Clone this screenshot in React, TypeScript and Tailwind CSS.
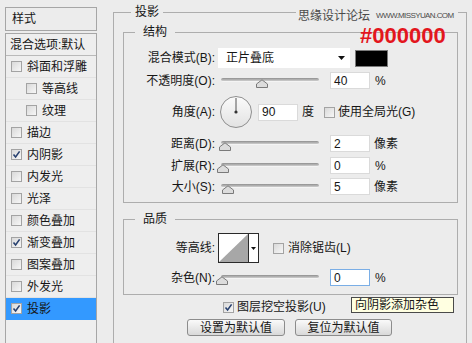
import React from "react";

type Item = { label: string; sub?: boolean; checked?: boolean; active?: boolean };

const styleItems: Item[] = [
  { label: "斜面和浮雕" },
  { label: "等高线", sub: true },
  { label: "纹理", sub: true },
  { label: "描边" },
  { label: "内阴影", checked: true },
  { label: "内发光" },
  { label: "光泽" },
  { label: "颜色叠加" },
  { label: "渐变叠加", checked: true },
  { label: "图案叠加" },
  { label: "外发光" },
  { label: "投影", checked: true, active: true },
];

function Check({ checked }: { checked?: boolean }) {
  return (
    <span className="w-[11px] h-[11px] shrink-0 border border-[#a3a3a3] bg-gradient-to-br from-[#d9d9d9] to-[#f7f7f7] flex items-center justify-center">
      {checked && (
        <svg width="9" height="9" viewBox="0 0 9 9">
          <path d="M1.5 4.5 L3.6 7 L7.6 1.4" stroke="#27406f" strokeWidth="1.6" fill="none" />
        </svg>
      )}
    </span>
  );
}

function Label({ children }: { children: React.ReactNode }) {
  return <span className="w-[91px] shrink-0 text-right">{children}</span>;
}

// thumb = centre of the slider knob, in px from the slider's left edge
function Slider({ thumb }: { thumb: number }) {
  return (
    <div className="relative ml-[3px] w-[104px] h-[17px] shrink-0">
      <div className="mt-[6px] mx-[3px] h-[4px] rounded-full bg-gradient-to-b from-[#8f8f8f] to-[#cfcfcf] border-b border-[#f4f4f4]" />
      <svg
        className="absolute top-[7px]"
        style={{ left: thumb - 6 }}
        width="12"
        height="9"
        viewBox="0 0 12 9"
      >
        <path d="M0.5 8.5 V5 L6 0.8 L11.5 5 V8.5 Z" fill="#dcdcdc" stroke="#7a7a7a" />
      </svg>
    </div>
  );
}

function Field({ value, focus, className = "" }: { value: string; focus?: boolean; className?: string }) {
  return (
    <div
      className={`w-[40px] h-[17px] shrink-0 bg-white border flex items-center pl-[3px] ${
        focus ? "border-[#7aaee6]" : "border-[#dadada]"
      } ${className}`}
    >
      {value}
    </div>
  );
}

export default function App() {
  return (
    <div className="relative w-[472px] h-[343px] overflow-hidden bg-[#ececec] flex items-start text-[12px] leading-[16px] text-[#161616] font-['Liberation_Sans','Noto_Sans_CJK_SC',sans-serif]">
      {/* Styles list */}
      <div className="ml-[5px] mt-[7px] w-[92px] shrink-0 flex flex-col">
        <div className="h-[24px] border border-[#a6a6a6] flex items-center pl-[6px]">样式</div>
        <div className="mt-[2px] h-[400px] border border-[#a6a6a6] bg-[#eeeeee]">
          <div className="h-[22px] border-b border-[#b9b9b9] flex items-center pl-[4px]">混合选项:默认</div>
          {styleItems.map((it) => (
            <div
              key={it.label}
              className={`h-[22px] border-b flex items-center gap-[5px] ${it.sub ? "pl-[20px]" : "pl-[5px]"} ${
                it.active ? "bg-[#3399ff] border-[#3399ff]" : "border-[#e2e2e2]"
              }`}
            >
              <Check checked={it.checked} />
              <span>{it.label}</span>
            </div>
          ))}
        </div>
      </div>

      {/* Drop shadow panel */}
      <fieldset className="ml-[16px] mt-[4px] w-[354px] h-[400px] shrink-0 border border-[#adadad] pl-[9px] pr-[8px]">
        <legend className="ml-[8px] px-[4px] leading-[16px]">投影</legend>

        {/* Structure */}
        <fieldset className="mt-[4px] w-[335px] border border-[#adadad] pb-[7px]">
          <legend className="ml-[11px] px-[8px] leading-[16px]">结构</legend>

          <div className="mt-[8px] h-[20px] flex items-center">
            <Label>混合模式(B):</Label>
            <div className="ml-[3px] w-[132px] h-[20px] bg-white flex items-center justify-between pl-[8px] pr-[5px]">
              <span>正片叠底</span>
              <svg width="7" height="4" viewBox="0 0 7 4">
                <path d="M0 0 H7 L3.5 4 Z" fill="#111" />
              </svg>
            </div>
            <div className="ml-[5px] w-[33px] h-[17px] bg-black border border-[#7a7a7a]" />
          </div>

          <div className="mt-[4px] h-[17px] flex items-center">
            <Label>不透明度(O):</Label>
            <Slider thumb={44} />
            <Field value="40" className="ml-[8px]" />
            <span className="ml-[5px]">%</span>
          </div>

          <div className="mt-[7px] h-[32px] flex items-center">
            <Label>角度(A):</Label>
            <svg className="ml-[5px] shrink-0" width="32" height="32" viewBox="0 0 32 32">
              <defs>
                <linearGradient id="dial" x1="0" y1="0" x2="0" y2="1">
                  <stop offset="0" stopColor="#fbfbfb" />
                  <stop offset="1" stopColor="#e2e2e2" />
                </linearGradient>
              </defs>
              <circle cx="16" cy="16" r="15.5" fill="url(#dial)" stroke="#8e8e8e" />
              <line x1="16" y1="16" x2="16" y2="2" stroke="#555" strokeWidth="1" />
              <circle cx="16" cy="16" r="1.6" fill="#333" />
            </svg>
            <Field value="90" className="ml-[6px]" />
            <span className="ml-[4px]">度</span>
            <span className="ml-[10px] flex items-center">
              <Check />
            </span>
            <span className="ml-[3px]">使用全局光(G)</span>
          </div>

          <div className="mt-[7px] h-[17px] flex items-center">
            <Label>距离(D):</Label>
            <Slider thumb={6.5} />
            <Field value="2" className="ml-[8px]" />
            <span className="ml-[4px]">像素</span>
          </div>

          <div className="mt-[5px] h-[17px] flex items-center">
            <Label>扩展(R):</Label>
            <Slider thumb={4.5} />
            <Field value="0" className="ml-[8px]" />
            <span className="ml-[5px]">%</span>
          </div>

          <div className="mt-[4px] h-[17px] flex items-center">
            <Label>大小(S):</Label>
            <Slider thumb={9.5} />
            <Field value="5" className="ml-[8px]" />
            <span className="ml-[4px]">像素</span>
          </div>
        </fieldset>

        {/* Quality */}
        <fieldset className="mt-[8px] w-[335px] border border-[#adadad] pb-[8px]">
          <legend className="ml-[11px] px-[8px] leading-[16px]">品质</legend>

          <div className="mt-[6px] h-[30px] flex items-center">
            <Label>等高线:</Label>
            <div className="ml-[3px] w-[41px] h-[30px] shrink-0 border border-[#2a2a2a] bg-white flex">
              <svg width="29" height="28" viewBox="0 0 29 28">
                <path d="M0 28 L29 0 V28 Z" fill="#a7a7a7" />
              </svg>
              <div className="w-[10px] h-full border-l border-[#2a2a2a] flex items-center justify-center">
                <svg width="5" height="3" viewBox="0 0 5 3">
                  <path d="M0 0 H5 L2.5 3 Z" fill="#111" />
                </svg>
              </div>
            </div>
            <span className="ml-[14px] flex items-center">
              <Check />
            </span>
            <span className="ml-[4px]">消除锯齿(L)</span>
          </div>

          <div className="mt-[6px] h-[17px] flex items-center">
            <Label>杂色(N):</Label>
            <Slider thumb={4} />
            <Field value="0" focus className="ml-[8px]" />
            <span className="ml-[5px]">%</span>
          </div>
        </fieldset>

        <div className="relative mt-[4px] h-[16px] flex items-center pl-[100px]">
          <Check checked />
          <span className="ml-[3px]">图层挖空投影(U)</span>
          <div className="absolute left-[228px] top-[-2px] w-[103px] h-[16px] bg-[#ffffe1] border border-[#4a4a4a] flex items-center pl-[3px] leading-[14px] whitespace-nowrap">
            向阴影添加杂色
          </div>
        </div>

        <div className="mt-[4px] flex gap-[10px] pl-[64px]">
          <button className="w-[98px] h-[17px] rounded-[3px] border border-[#8c8c8c] bg-gradient-to-b from-[#fafafa] to-[#d9d9d9] flex items-center justify-center leading-[14px]">
            设置为默认值
          </button>
          <button className="w-[97px] h-[17px] rounded-[3px] border border-[#8c8c8c] bg-gradient-to-b from-[#fafafa] to-[#d9d9d9] flex items-center justify-center leading-[14px]">
            复位为默认值
          </button>
        </div>
      </fieldset>

      {/* watermark and annotation laid over the dialog */}
      <div className="absolute top-[8px] left-[296px] pl-[2px] pr-[4px] bg-[#ececec] flex items-center whitespace-nowrap text-[#4a4a4a]">
        <span className="text-[12px] leading-[16px]">思缘设计论坛</span>
        <span className="ml-[6px] text-[8px] leading-[16px] tracking-[-0.6px]">WWW.MISSYUAN.COM</span>
      </div>
      <div className="absolute left-[360px] top-[25px] text-[22px] leading-none font-bold text-[#e3161d] whitespace-nowrap">#000000</div>
    </div>
  );
}
